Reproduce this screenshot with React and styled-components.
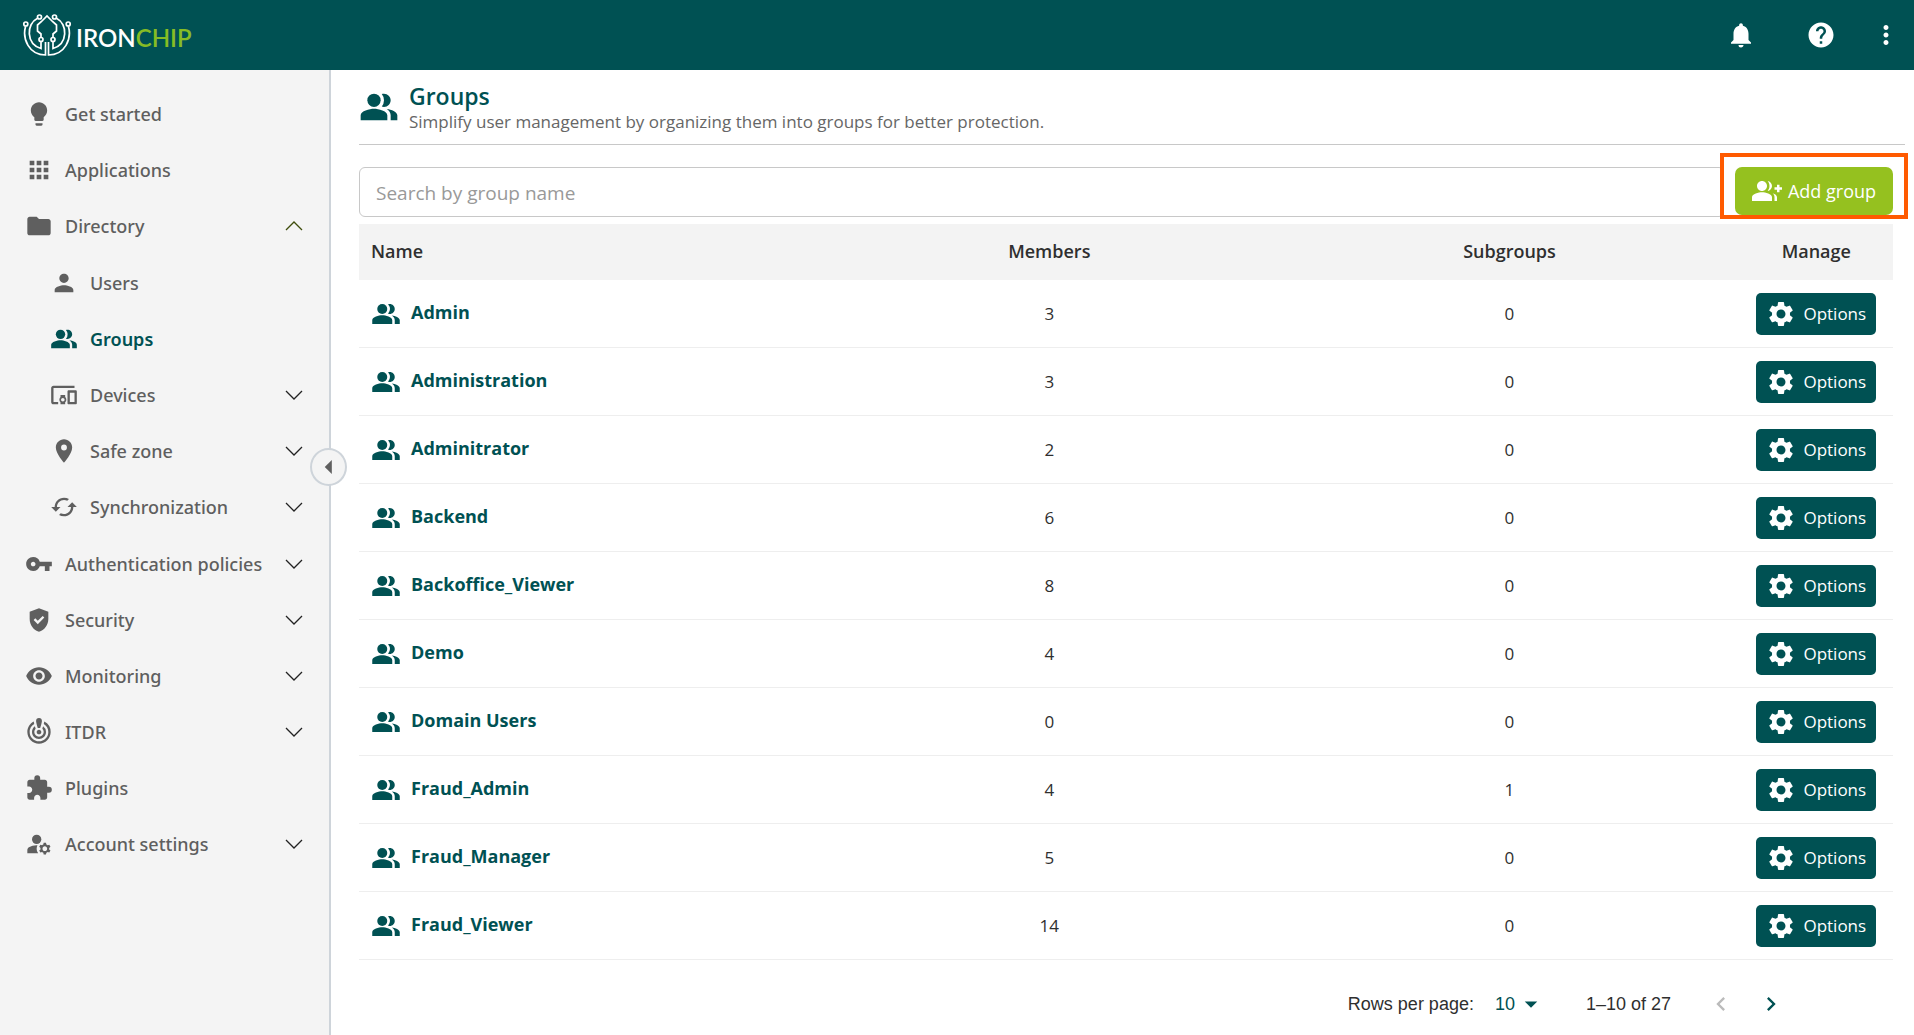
import React, { useState } from 'react';
import styled, { createGlobalStyle } from 'styled-components';
import {
    MdLightbulb, MdApps, MdFolder, MdPerson, MdPeopleAlt, MdDevicesOther, MdPlace, MdCached, MdVpnKey,
    MdGppGood, MdVisibility, MdCrisisAlert, MdExtension, MdManageAccounts, MdNotifications, MdHelp,
    MdMoreVert, MdGroupAdd, MdSettings, MdArrowDropDown, MdChevronLeft, MdChevronRight, MdArrowLeft,
} from 'react-icons/md';

const menu = [
    { label: 'Get started', icon: MdLightbulb },
    { label: 'Applications', icon: MdApps },
    {
        label: 'Directory', icon: MdFolder, open: true, children: [
            { label: 'Users', icon: MdPerson },
            { label: 'Groups', icon: MdPeopleAlt, active: true },
            { label: 'Devices', icon: MdDevicesOther, more: true },
            { label: 'Safe zone', icon: MdPlace, more: true },
            { label: 'Synchronization', icon: MdCached, more: true },
        ],
    },
    { label: 'Authentication policies', icon: MdVpnKey, more: true },
    { label: 'Security', icon: MdGppGood, more: true },
    { label: 'Monitoring', icon: MdVisibility, more: true },
    { label: 'ITDR', icon: MdCrisisAlert, more: true },
    { label: 'Plugins', icon: MdExtension },
    { label: 'Account settings', icon: MdManageAccounts, more: true },
];

const groups = [
    { name: 'Admin', members: 3, subgroups: 0 },
    { name: 'Administration', members: 3, subgroups: 0 },
    { name: 'Adminitrator', members: 2, subgroups: 0 },
    { name: 'Backend', members: 6, subgroups: 0 },
    { name: 'Backoffice_Viewer', members: 8, subgroups: 0 },
    { name: 'Demo', members: 4, subgroups: 0 },
    { name: 'Domain Users', members: 0, subgroups: 0 },
    { name: 'Fraud_Admin', members: 4, subgroups: 1 },
    { name: 'Fraud_Manager', members: 5, subgroups: 0 },
    { name: 'Fraud_Viewer', members: 14, subgroups: 0 },
];

function Chevron({ up }) {
    return (
        <ChevronSvg viewBox="0 0 18 10" $up={up}>
            <polyline points="1,1 9,9 17,1" />
        </ChevronSvg>
    );
}

function MenuItem({ item, sub }) {
    const Icon = item.icon;
    return (
        <li>
            <MenuLink href="#" $sub={sub} $active={item.active}>
                <Icon size={28} />
                <MenuLabel>{item.label}</MenuLabel>
                {(item.more || item.open) && <Chevron up={item.open} />}
            </MenuLink>
            {item.children && (
                <SubMenu>
                    {item.children.map((child) => <MenuItem key={child.label} item={child} sub />)}
                </SubMenu>
            )}
        </li>
    );
}

function Logo() {
    return (
        <LogoLink href="#">
            <LogoMark viewBox="0 0 48 44">
                <path d="M2.6 13.2C-1 26 6 42 22.5 42V29" />
                <path d="M45.4 13.2C49 26 42 42 25.5 42V29" />
                <path d="M14.5 5.2C3 11 3 31 18 35.5V28.5" />
                <path d="M33.5 5.2C45 11 45 31 30 35.5V28.5" />
                <path d="M18 24V21L14.5 18V12L18.5 8.5L24 3L29.5 8.5L33.5 12V18L30 21V24" />
                <circle cx="2.8" cy="11" r="2" />
                <circle cx="45.2" cy="11" r="2" />
                <circle cx="16.5" cy="4" r="2" />
                <circle cx="31.5" cy="4" r="2" />
                <circle cx="18" cy="26.5" r="2" />
                <circle cx="30" cy="26.5" r="2" />
            </LogoMark>
            <LogoText>IRON<span>CHIP</span></LogoText>
        </LogoLink>
    );
}

export default function App() {
    const [search, setSearch] = useState('');
    const [rows, setRows] = useState('10');
    const visible = groups.filter((g) => g.name.toLowerCase().includes(search.toLowerCase()));

    return (
        <Page>
            <GlobalStyle />
            <TopBar>
                <Logo />
                <TopActions>
                    <IconButton aria-label="Notifications"><MdNotifications size={30} /></IconButton>
                    <IconButton aria-label="Help"><MdHelp size={30} /></IconButton>
                    <IconButton aria-label="More"><MdMoreVert size={30} /></IconButton>
                </TopActions>
            </TopBar>
            <Body>
                <Sidebar>
                    <Menu>
                        {menu.map((item) => <MenuItem key={item.label} item={item} />)}
                    </Menu>
                    <Collapse aria-label="Collapse menu"><MdArrowLeft size={34} /></Collapse>
                </Sidebar>
                <Main>
                    <PageHeader>
                        <MdPeopleAlt size={40} />
                        <div>
                            <Title>Groups</Title>
                            <Subtitle>Simplify user management by organizing them into groups for better protection.</Subtitle>
                        </div>
                    </PageHeader>
                    <Content>
                        <Toolbar>
                            <Search
                                aria-label="Search by group name"
                                placeholder="Search by group name"
                                value={search}
                                onChange={(e) => setSearch(e.target.value)}
                            />
                            <AddWrap>
                                <AddButton><MdGroupAdd size={30} />Add group</AddButton>
                            </AddWrap>
                        </Toolbar>
                        <Table>
                            <thead>
                                <tr>
                                    <Th $width="30%" $left>Name</Th>
                                    <Th $width="30%">Members</Th>
                                    <Th $width="30%">Subgroups</Th>
                                    <Th $width="10%">Manage</Th>
                                </tr>
                            </thead>
                            <tbody>
                                {visible.map((g) => (
                                    <tr key={g.name}>
                                        <Td $left>
                                            <GroupLink href="#"><MdPeopleAlt size={30} /><span>{g.name}</span></GroupLink>
                                        </Td>
                                        <Td>{g.members}</Td>
                                        <Td>{g.subgroups}</Td>
                                        <Td><OptionsButton><MdSettings size={30} />Options</OptionsButton></Td>
                                    </tr>
                                ))}
                            </tbody>
                        </Table>
                        <Pagination>
                            <label htmlFor="rows">Rows per page:</label>
                            <RowsSelect>
                                <select id="rows" value={rows} onChange={(e) => setRows(e.target.value)}>
                                    <option>10</option>
                                    <option>25</option>
                                    <option>50</option>
                                </select>
                                <MdArrowDropDown size={30} />
                            </RowsSelect>
                            <Range>1–10 of 27</Range>
                            <PageButton aria-label="Previous page" disabled><MdChevronLeft size={28} /></PageButton>
                            <PageButton aria-label="Next page"><MdChevronRight size={28} /></PageButton>
                        </Pagination>
                    </Content>
                </Main>
            </Body>
        </Page>
    );
}

const GlobalStyle = createGlobalStyle`
    * {
        box-sizing: border-box;
    }
    body {
        margin: 0;
        background: #fff;
        color: #2f2f2f;
        font-family: "Open Sans", "Noto Sans", sans-serif;
        font-size: 17px;
    }
    button, input, select {
        font: inherit;
    }
    button {
        cursor: pointer;
    }
    svg {
        flex-shrink: 0;
    }
`;

const Page = styled.div`
    display: flex;
    flex-direction: column;
    min-height: 100vh;
`;

const TopBar = styled.header`
    display: flex;
    align-items: center;
    justify-content: space-between;
    height: 70px;
    padding: 0 13px 0 22px;
    background: #005153;
    color: #fff;
`;

const LogoLink = styled.a`
    display: flex;
    align-items: center;
    gap: 4px;
    color: #fff;
    text-decoration: none;
`;

const LogoMark = styled.svg`
    width: 50px;
    height: 44px;
    fill: none;
    stroke: #fff;
    stroke-width: 1.7;
`;

const LogoText = styled.span`
    padding-top: 6px;
    font-family: Lato, sans-serif;
    font-size: 24px;
    line-height: 30px;
    font-weight: 600;

    span {
        color: #86bc25;
    }
`;

const TopActions = styled.div`
    display: flex;
    align-items: center;
    gap: 50px;

    button:last-child {
        margin-left: -15px;
    }
`;

const IconButton = styled.button`
    display: flex;
    padding: 0;
    border: none;
    background: none;
    color: inherit;
`;

const Body = styled.div`
    display: flex;
    flex: 1;
`;

const Sidebar = styled.aside`
    position: relative;
    flex: 0 0 331px;
    padding-top: 16px;
    border-right: 2px solid #ced4da;
    background: #f4f4f4;
`;

const Menu = styled.ul`
    margin: 0;
    padding: 0;
    list-style: none;
`;

const SubMenu = styled.ul`
    margin: 0;
    padding: 1px 0;
    list-style: none;
`;

const MenuLink = styled.a`
    display: flex;
    align-items: center;
    height: 56px;
    padding: 0 26px 0 ${({ $sub }) => ($sub ? '50px' : '25px')};
    gap: 12px;
    color: ${({ $active }) => ($active ? '#005153' : '#5f5f5f')};
    font-family: "Noto Sans", "Open Sans", sans-serif;
    font-size: 18px;
    font-weight: ${({ $active }) => ($active ? 600 : 500)};
    text-decoration: none;
`;

const MenuLabel = styled.span`
    flex: 1;
    white-space: nowrap;
`;

const ChevronSvg = styled.svg`
    width: 18px;
    height: 10px;
    fill: none;
    stroke: ${({ $up }) => ($up ? '#3f4d0c' : '#222')};
    stroke-width: 1.3;
    transform: ${({ $up }) => ($up ? 'rotate(180deg)' : 'none')};
`;

/* sits on the sidebar border, halfway down the page */
const Collapse = styled.button`
    position: absolute;
    top: 378px;
    right: -18px;
    display: flex;
    align-items: center;
    justify-content: center;
    width: 37px;
    height: 38px;
    padding: 0;
    border: 2px solid #ced4da;
    border-radius: 50%;
    background: #f4f4f4;
    color: #5f5f5f;
`;

const Main = styled.main`
    flex: 1;
    min-width: 0;
    padding: 10px 9px 0 28px;
`;

const PageHeader = styled.div`
    display: flex;
    align-items: center;
    gap: 10px;
    height: 65px;
    padding-bottom: 11px;
    border-bottom: 1px solid #c8c8c8;
    color: #005153;
`;

const Title = styled.h1`
    margin: 0;
    font-size: 23px;
    line-height: 30px;
    font-weight: 600;
`;

const Subtitle = styled.p`
    margin: 0;
    color: #666;
    font-size: 17px;
    line-height: 22px;
`;

const Content = styled.div`
    padding: 22px 12px 0 0;
`;

const Toolbar = styled.div`
    display: flex;
    align-items: flex-start;
    margin-bottom: 7px;
`;

const Search = styled.input`
    flex: 1;
    min-width: 0;
    height: 50px;
    padding: 2px 16px 0;
    border: 1px solid #c8c8c8;
    border-radius: 6px;
    font-size: 19px;

    &::placeholder {
        color: #999;
    }
`;

const AddWrap = styled.div`
    margin: -14px -15px -3px -5px;
    padding: 10px 11px 0;
    border: 4px solid #ff5a00;
    background: #fff;
`;

const AddButton = styled.button`
    display: flex;
    align-items: center;
    justify-content: center;
    gap: 6px;
    width: 158px;
    height: 48px;
    padding: 0;
    border: none;
    border-radius: 7px;
    background: #95c11f;
    color: #fff;
    font-size: 18px;
    white-space: nowrap;
`;

const Table = styled.table`
    width: 100%;
    border-collapse: separate;
    border-spacing: 0;
    table-layout: fixed;
`;

const Th = styled.th`
    width: ${({ $width }) => $width};
    height: 56px;
    padding: 0 12px 2px;
    background: #f3f3f3;
    font-size: 18px;
    font-weight: 600;
    text-align: ${({ $left }) => ($left ? 'left' : 'center')};
`;

const Td = styled.td`
    height: 68px;
    padding: 0 12px;
    border-bottom: 1px solid #eee;
    text-align: ${({ $left }) => ($left ? 'left' : 'center')};
`;

const GroupLink = styled.a`
    display: flex;
    align-items: center;
    gap: 10px;
    color: #005153;
    font-size: 18px;
    font-weight: 700;
    text-decoration: none;

    span {
        padding-bottom: 3px;
    }
`;

const OptionsButton = styled.button`
    display: inline-flex;
    align-items: center;
    justify-content: center;
    gap: 7px;
    width: 120px;
    height: 42px;
    padding: 0;
    border: none;
    border-radius: 5px;
    background: #005153;
    color: #fff;
    vertical-align: middle;
`;

const Pagination = styled.div`
    display: flex;
    align-items: center;
    justify-content: flex-end;
    height: 88px;
    padding-right: 108px;
    font-family: "Liberation Sans", sans-serif;
    font-size: 18px;
`;

const RowsSelect = styled.div`
    display: flex;
    align-items: center;
    margin-left: 21px;
    color: #005153;

    select {
        appearance: none;
        padding: 0;
        border: none;
        background: none;
        color: inherit;
    }
`;

const Range = styled.span`
    margin: 0 36px 0 40px;
`;

const PageButton = styled.button`
    display: flex;
    margin-left: 22px;
    padding: 0;
    border: none;
    background: none;
    color: #005153;

    &:disabled {
        margin-left: 0;
        color: #bbb;
    }
`;
